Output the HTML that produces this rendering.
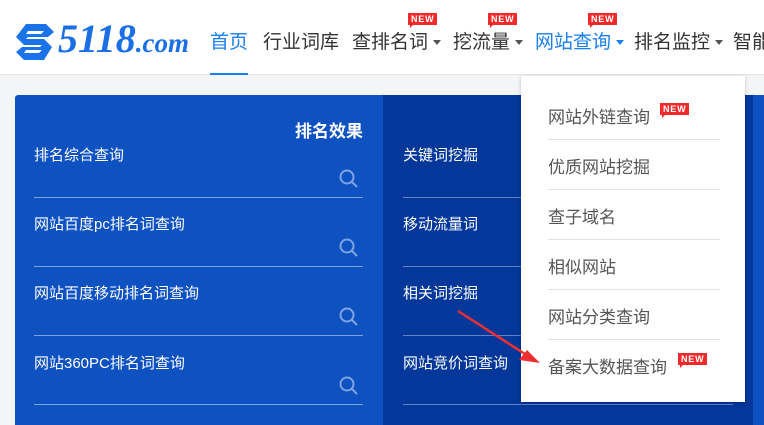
<!DOCTYPE html>
<html><head><meta charset="utf-8"><style>
*{margin:0;padding:0;box-sizing:border-box}
body{width:764px;height:415px;overflow:hidden;background:#f4f5f7;font-family:"Liberation Sans","Noto Sans CJK SC",sans-serif;position:relative}
.hdr{position:absolute;left:0;top:0;width:764px;height:75px;background:#fff;border-bottom:1px solid #e6e6e6}
.nav{position:absolute;top:27px;font-size:19px;color:#333;white-space:nowrap}
.car{display:inline-block;width:0;height:0;border-left:4px solid transparent;border-right:4px solid transparent;border-top:5px solid #555;vertical-align:middle;margin-left:5px}
.new{position:absolute;background:#f02a2a;color:#fff;font-size:9px;font-weight:bold;padding:0 3px;height:12px;line-height:12px;letter-spacing:.8px}
.new:after{content:"";position:absolute;left:2px;bottom:-3px;border-left:3px solid #f02a2a;border-bottom:3px solid transparent}
.p1{position:absolute;left:15px;top:95px;width:368px;height:330px;background:#0e51c1;border-radius:3px 0 0 0}
.p2{position:absolute;left:383px;top:95px;width:370px;height:330px;background:#03379a}
.p3{position:absolute;left:753px;top:95px;width:20px;height:330px;background:#0e51c1}
.it{position:absolute;color:#fff;font-size:15px}
.ln{position:absolute;height:1px;background:#7fa3e0}
.sr{position:absolute}
.dd{position:absolute;left:521px;top:76px;width:224px;height:326px;background:#fff;box-shadow:0 1px 4px rgba(0,0,0,.2)}
.di{position:absolute;left:27px;font-size:17px;color:#555}
.ds{position:absolute;left:27px;width:172px;height:1px;background:#e3e3e3}
</style></head><body>
<div class="hdr">
<svg style="position:absolute;left:14px;top:22px" width="42" height="40" viewBox="0 0 42 40"><path d="M12 2h20l8 8-6 5H14l-2 2h18l8 8-8 13H10L2 30l6-5h18l2-2H10L2 15z" fill="#1a73e8"/><path d="M14 9h16l-3 3H12zM12 28h16l-3 3H10z" fill="#fff"/></svg>
<div style="position:absolute;left:58px;top:15px;font-size:40px;font-style:italic;font-weight:bold;color:#1a6fe6;font-family:'Liberation Serif',serif;white-space:nowrap">5118<span style="font-size:27px">.com</span></div>
<div class="nav" style="left:210px;color:#1a7ff0">首页</div>
<div style="position:absolute;left:210px;top:73px;width:38px;height:2px;background:#1a7ff0"></div>
<div class="nav" style="left:263px">行业词库</div>
<div class="nav" style="left:352px">查排名词<span class="car"></span></div>
<div class="new" style="left:408px;top:13px">NEW</div>
<div class="nav" style="left:453px">挖流量<span class="car"></span></div>
<div class="new" style="left:488px;top:13px">NEW</div>
<div class="nav" style="left:535px;color:#1a7ff0">网站查询<span class="car" style="border-top-color:#1a7ff0"></span></div>
<div class="new" style="left:588px;top:13px">NEW</div>
<div class="nav" style="left:634px">排名监控<span class="car"></span></div>
<div class="nav" style="left:733px">智能</div>
</div>
<div class="p1"></div><div class="p2"></div><div class="p3"></div>
<div class="it" style="left:295px;top:117px;font-weight:bold;font-size:17px">排名效果</div>
<div class="it" style="left:34px;top:144px">排名综合查询</div>
<div class="it" style="left:34px;top:213px">网站百度pc排名词查询</div>
<div class="it" style="left:34px;top:282px">网站百度移动排名词查询</div>
<div class="it" style="left:34px;top:352px">网站360PC排名词查询</div>
<div class="ln" style="left:34px;top:197px;width:329px"></div>
<div class="ln" style="left:34px;top:266px;width:329px"></div>
<div class="ln" style="left:34px;top:335px;width:329px"></div>
<div class="ln" style="left:34px;top:404px;width:329px"></div>
<svg class="sr" style="left:338px;top:168px" width="22" height="22"><circle cx="9" cy="9" r="6.5" stroke="#7fa3e0" stroke-width="2" fill="none"/><path d="M14 14l5 5" stroke="#7fa3e0" stroke-width="2"/></svg>
<svg class="sr" style="left:338px;top:237px" width="22" height="22"><circle cx="9" cy="9" r="6.5" stroke="#7fa3e0" stroke-width="2" fill="none"/><path d="M14 14l5 5" stroke="#7fa3e0" stroke-width="2"/></svg>
<svg class="sr" style="left:338px;top:306px" width="22" height="22"><circle cx="9" cy="9" r="6.5" stroke="#7fa3e0" stroke-width="2" fill="none"/><path d="M14 14l5 5" stroke="#7fa3e0" stroke-width="2"/></svg>
<svg class="sr" style="left:338px;top:375px" width="22" height="22"><circle cx="9" cy="9" r="6.5" stroke="#7fa3e0" stroke-width="2" fill="none"/><path d="M14 14l5 5" stroke="#7fa3e0" stroke-width="2"/></svg>
<div class="it" style="left:403px;top:144px">关键词挖掘</div>
<div class="it" style="left:403px;top:213px">移动流量词</div>
<div class="it" style="left:403px;top:282px">相关词挖掘</div>
<div class="it" style="left:403px;top:352px">网站竞价词查询</div>
<div class="ln" style="left:403px;top:197px;width:130px;background:#5f7fc8"></div>
<div class="ln" style="left:403px;top:266px;width:130px;background:#5f7fc8"></div>
<div class="ln" style="left:403px;top:335px;width:130px;background:#5f7fc8"></div>
<div class="ln" style="left:403px;top:404px;width:330px;background:#5f7fc8"></div>
<div class="dd">
<div class="di" style="top:27px">网站外链查询</div><div class="new" style="left:139px;top:27px">NEW</div>
<div class="ds" style="top:63px"></div>
<div class="di" style="top:77px">优质网站挖掘</div>
<div class="ds" style="top:113px"></div>
<div class="di" style="top:127px">查子域名</div>
<div class="ds" style="top:163px"></div>
<div class="di" style="top:177px">相似网站</div>
<div class="ds" style="top:213px"></div>
<div class="di" style="top:227px">网站分类查询</div>
<div class="ds" style="top:263px"></div>
<div class="di" style="top:277px">备案大数据查询</div><div class="new" style="left:157px;top:277px">NEW</div>
</div>
<svg style="position:absolute;left:0;top:0" width="764" height="415"><path d="M458 311L528 356" stroke="#f03030" stroke-width="2.5"/><path d="M540 363L519 360L527 350z" fill="#f03030"/></svg>
</body></html>
